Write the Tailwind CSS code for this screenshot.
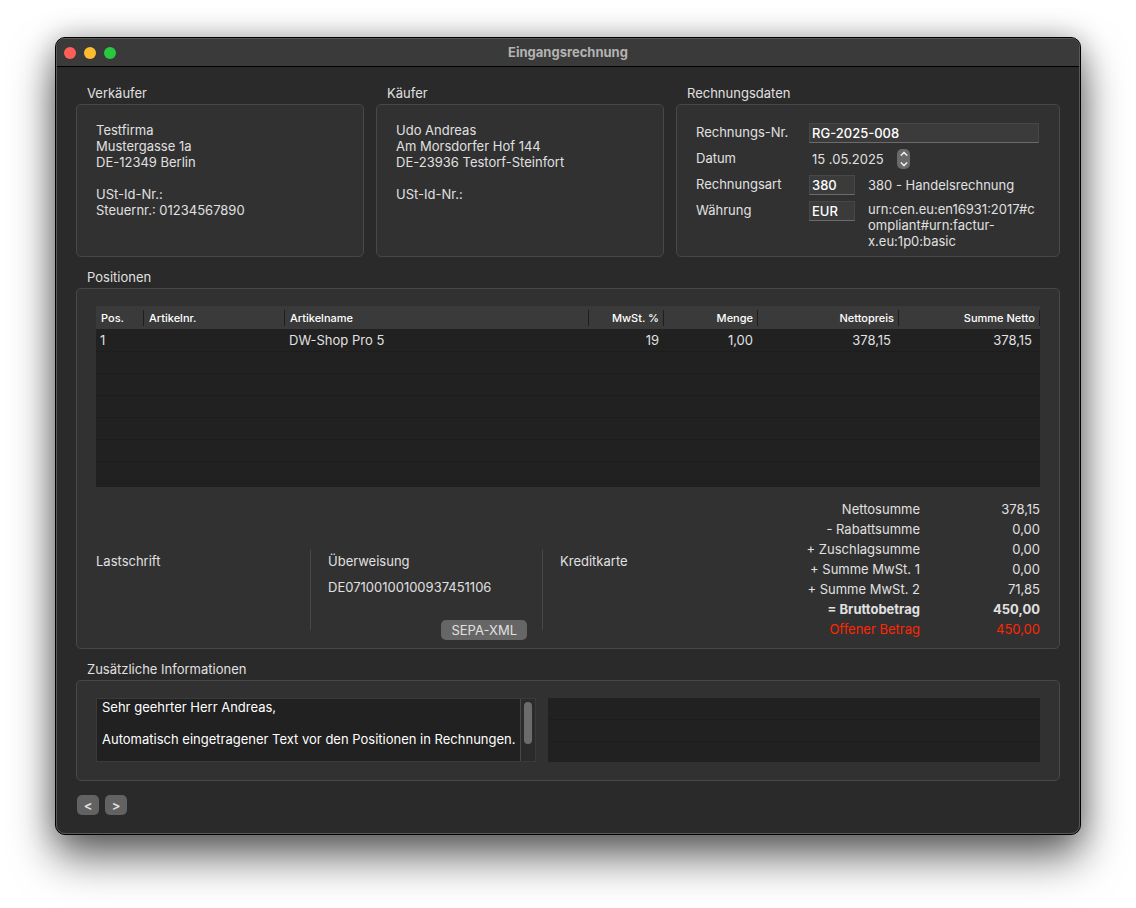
<!DOCTYPE html>
<html lang="de">

<head>
  <meta charset="UTF-8">
  <meta name="viewport" content="width=device-width, initial-scale=1.0">
  <title>Eingangsrechnung</title>
  <script src="https://cdn.jsdelivr.net/npm/@tailwindcss/browser@4"></script>
</head>

<body class="bg-white px-[55px] pt-[37px] pb-[73px] font-['Inter',sans-serif] text-[13px] leading-4 text-[#e0e0e0]">
  <div class="rounded-[10px] border border-black bg-[#2a2a2a] shadow-[0_22px_44px_rgb(0_0_0/0.6),0_0_28px_rgb(0_0_0/0.25)]">
    <div class="rounded-[9px] border border-[#595959]">

      <!-- Titelleiste -->
      <header class="grid h-7 grid-cols-[1fr_auto_1fr] items-center rounded-t-lg border-b border-black bg-[#3a3a3a] px-[7px]">
        <div class="flex gap-2">
          <button type="button" aria-label="Schließen" class="size-3 rounded-full bg-[#ff5f57]"></button>
          <button type="button" aria-label="Minimieren" class="size-3 rounded-full bg-[#febc2e]"></button>
          <button type="button" aria-label="Maximieren" class="size-3 rounded-full bg-[#28c840]"></button>
        </div>
        <h1 class="pb-[2px] font-bold text-[#b3b3b3]">Eingangsrechnung</h1>
      </header>

      <main class="px-[19px] pt-[18px] pb-[18px]">
        <div class="grid grid-cols-[3fr_3fr_4fr] gap-3">
          <!-- Verkäufer -->
          <section class="flex flex-col">
            <h2 class="mb-[3px] pl-[11px]">Verkäufer</h2>
            <div class="grow rounded-[5px] border border-[#484848] bg-[#313131] px-[19px] pt-[17px]">
              <p>Testfirma<br>Mustergasse 1a<br>DE-12349 Berlin</p>
              <p class="mt-4">USt-Id-Nr.:<br>Steuernr.: 01234567890</p>
            </div>
          </section>

          <!-- Käufer -->
          <section class="flex flex-col">
            <h2 class="mb-[3px] pl-[11px]">Käufer</h2>
            <div class="grow rounded-[5px] border border-[#484848] bg-[#313131] px-[19px] pt-[17px]">
              <p>Udo Andreas<br>Am Morsdorfer Hof 144<br>DE-23936 Testorf-Steinfort</p>
              <p class="mt-4">USt-Id-Nr.:</p>
            </div>
          </section>

          <!-- Rechnungsdaten -->
          <section>
            <h2 class="mb-[3px] pl-[11px]">Rechnungsdaten</h2>
            <form class="grid grid-cols-[113px_46px_1fr] gap-y-[6px] rounded-[5px] border border-[#484848] bg-[#313131] pt-[18px] pr-5 pb-[7px] pl-[19px]">
              <label for="number" class="leading-[18px]">Rechnungs-Nr.</label>
              <input id="number" type="text" value="RG-2025-008" class="col-span-2 h-5 w-full border border-[#484848] border-b-[#6b6b6b] bg-[#3b3b3b] px-[2px] font-medium text-white">

              <label for="date" class="leading-[18px]">Datum</label>
              <div class="col-span-2 flex h-5 items-center">
                <input id="date" type="text" value="15 .05.2025" class="w-[88px] pl-[3px]">
                <div class="flex h-5 w-[13px] flex-col rounded-[5px] bg-[#696969]">
                  <button type="button" aria-label="Später" class="flex flex-1 items-center justify-center">
                    <svg class="h-2 w-2" viewBox="0 0 8 8" fill="none" stroke="#e8e8e8" stroke-width="1.5" stroke-linecap="round" stroke-linejoin="round"><path d="M1.2 5.2 4 2.4l2.8 2.8" /></svg>
                  </button>
                  <button type="button" aria-label="Früher" class="flex flex-1 items-center justify-center">
                    <svg class="h-2 w-2" viewBox="0 0 8 8" fill="none" stroke="#e8e8e8" stroke-width="1.5" stroke-linecap="round" stroke-linejoin="round"><path d="M1.2 2.8 4 5.6l2.8-2.8" /></svg>
                  </button>
                </div>
              </div>

              <label for="type" class="leading-[18px]">Rechnungsart</label>
              <input id="type" type="text" value="380" class="h-5 w-full border border-[#484848] border-b-[#6b6b6b] bg-[#3b3b3b] px-[2px] font-medium text-white">
              <p class="pl-[13px] leading-5">380 - Handelsrechnung</p>

              <label for="currency" class="leading-[18px]">Währung</label>
              <input id="currency" type="text" value="EUR" class="h-5 w-full border border-[#484848] border-b-[#6b6b6b] bg-[#3b3b3b] px-[2px] font-medium text-white">
              <p class="pl-[13px] wrap-anywhere">urn:cen.eu:en16931:2017#compliant#urn:factur-x.eu:1p0:basic</p>
            </form>
          </section>
        </div>

        <!-- Positionen -->
        <section class="mt-3">
          <h2 class="mb-[3px] pl-[11px]">Positionen</h2>
          <div class="rounded-[5px] border border-[#484848] bg-[#313131] px-[19px] pt-[17px] pb-2">
            <div class="bg-[#212121] pb-[3px]">
              <table class="w-full table-fixed border-collapse">
                <colgroup>
                  <col class="w-[48px]">
                  <col class="w-[141px]">
                  <col>
                  <col class="w-[75px]">
                  <col class="w-[94px]">
                  <col class="w-[141px]">
                  <col class="w-[141px]">
                </colgroup>
                <thead class="bg-[#3a3a3a] text-left text-[11px] text-white">
                  <tr class="h-[23px]">
                    <th class="p-0 font-medium"><div class="border-r border-[#1e1e1e] pl-[5px]">Pos.</div></th>
                    <th class="p-0 font-medium"><div class="border-r border-[#1e1e1e] pl-[5px]">Artikelnr.</div></th>
                    <th class="p-0 font-medium"><div class="border-r border-[#1e1e1e] pl-[5px]">Artikelname</div></th>
                    <th class="p-0 text-right font-medium"><div class="border-r border-[#1e1e1e] pr-1">MwSt. %</div></th>
                    <th class="p-0 text-right font-medium"><div class="border-r border-[#1e1e1e] pr-1">Menge</div></th>
                    <th class="p-0 text-right font-medium"><div class="border-r border-[#1e1e1e] pr-1">Nettopreis</div></th>
                    <th class="p-0 text-right font-medium"><div class="border-r border-[#1e1e1e] pr-1">Summe Netto</div></th>
                  </tr>
                </thead>
                <tbody>
                  <tr class="h-[22px] border-b border-[#1d1d1d]">
                    <td class="pl-1">1</td>
                    <td></td>
                    <td class="pl-1">DW-Shop Pro 5</td>
                    <td class="pr-[5px] text-right">19</td>
                    <td class="pr-[5px] text-right">1,00</td>
                    <td class="pr-2 text-right">378,15</td>
                    <td class="pr-2 text-right">378,15</td>
                  </tr>
                  <tr class="h-[22px] border-b border-[#1d1d1d]"><td colspan="7"></td></tr>
                  <tr class="h-[22px] border-b border-[#1d1d1d]"><td colspan="7"></td></tr>
                  <tr class="h-[22px] border-b border-[#1d1d1d]"><td colspan="7"></td></tr>
                  <tr class="h-[22px] border-b border-[#1d1d1d]"><td colspan="7"></td></tr>
                  <tr class="h-[22px] border-b border-[#1d1d1d]"><td colspan="7"></td></tr>
                  <tr class="h-[22px] border-b border-[#1d1d1d]"><td colspan="7"></td></tr>
                </tbody>
              </table>
            </div>

            <div class="mt-3 flex items-end">
              <!-- Zahlungsarten -->
              <div class="flex h-[90px] grow">
                <div class="w-[214px] pt-[3px]">Lastschrift</div>
                <div class="h-20 w-px bg-[#484848]"></div>
                <div class="flex w-[231px] flex-col pt-[3px] pr-[15px] pl-[17px]">
                  <h3>Überweisung</h3>
                  <p class="mt-[10px]">DE07100100100937451106</p>
                  <button type="button" class="mt-auto h-5 self-end rounded-[5px] bg-[#666666] px-[10px]">SEPA-XML</button>
                </div>
                <div class="h-20 w-px bg-[#484848]"></div>
                <div class="pt-[3px] pl-[17px]">Kreditkarte</div>
              </div>

              <!-- Summen -->
              <table class="mb-px text-right leading-5">
                <tbody>
                  <tr><th class="font-normal">Nettosumme</th><td class="w-[120px]">378,15</td></tr>
                  <tr><th class="font-normal">- Rabattsumme</th><td>0,00</td></tr>
                  <tr><th class="font-normal">+ Zuschlagsumme</th><td>0,00</td></tr>
                  <tr><th class="font-normal">+ Summe MwSt. 1</th><td>0,00</td></tr>
                  <tr><th class="font-normal">+ Summe MwSt. 2</th><td>71,85</td></tr>
                  <tr class="font-bold"><th>= Bruttobetrag</th><td>450,00</td></tr>
                  <tr class="text-[#ff2600]"><th class="font-normal">Offener Betrag</th><td>450,00</td></tr>
                </tbody>
              </table>
            </div>
          </div>
        </section>

        <!-- Zusätzliche Informationen -->
        <section class="mt-3">
          <h2 class="mb-[3px] pl-[11px]">Zusätzliche Informationen</h2>
          <div class="grid grid-cols-[440fr_492fr] gap-3 rounded-[5px] border border-[#484848] bg-[#313131] px-[19px] pt-[17px] pb-[18px]">
            <div class="flex h-16 border border-[#3a3a3a]">
              <textarea aria-label="Text vor den Positionen" class="grow resize-none overflow-hidden bg-[#212121] pl-[5px] text-white">Sehr geehrter Herr Andreas,

Automatisch eingetragener Text vor den Positionen in Rechnungen.</textarea>
              <div class="w-[15px] border-l border-[#484848] bg-[#2b2b2b] pt-[3px] pl-[3px]">
                <div class="h-[42px] w-2 rounded-full bg-[#6b6b6b]"></div>
              </div>
            </div>
            <div class="h-16 bg-[#212121]">
              <div class="h-[22px] border-b border-[#1d1d1d]"></div>
              <div class="h-[22px] border-b border-[#1d1d1d]"></div>
            </div>
          </div>
        </section>

        <!-- Navigation -->
        <nav class="mt-[14px] flex gap-[6px] pl-px font-semibold">
          <button type="button" aria-label="Vorherige Rechnung" class="h-5 w-[22px] rounded-[5px] bg-[#626262] leading-5">&lt;</button>
          <button type="button" aria-label="Nächste Rechnung" class="h-5 w-[22px] rounded-[5px] bg-[#626262] leading-5">&gt;</button>
        </nav>
      </main>
    </div>
  </div>
</body>

</html>
